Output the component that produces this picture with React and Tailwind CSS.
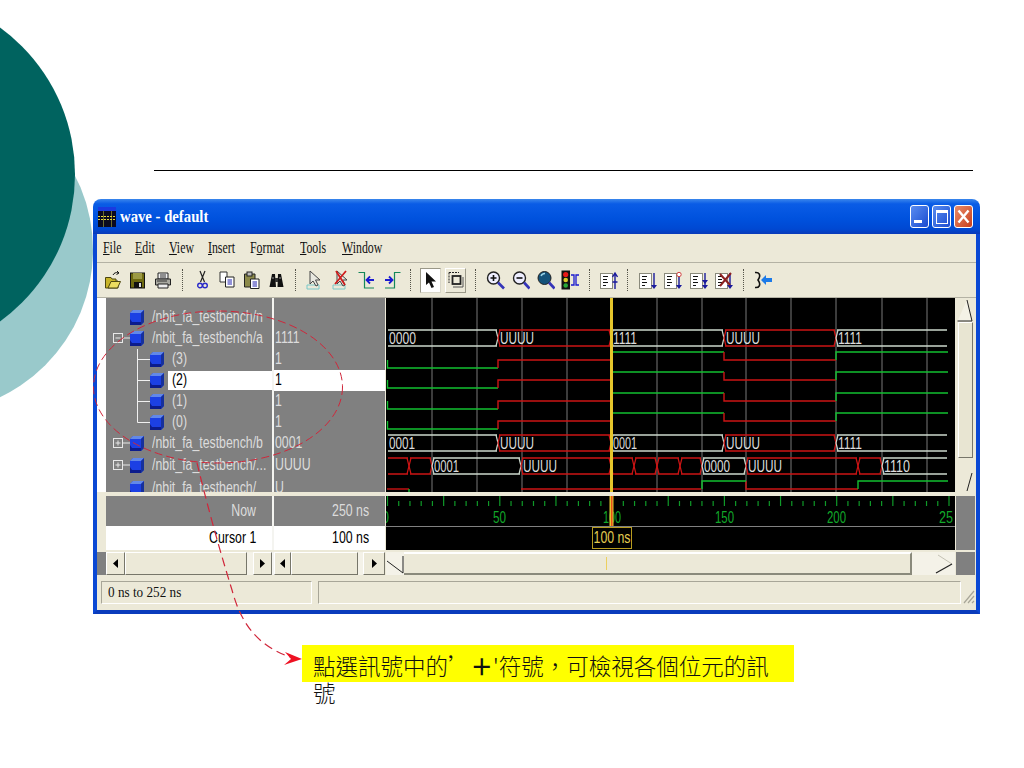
import React from 'react';

// wave window signal rows
const signals = [
  { name: '/nbit_fa_testbench/n', value: '', kind: 'top' },
  { name: '/nbit_fa_testbench/a', value: '1111', kind: 'open' },
  { name: '(3)', value: '1', kind: 'child' },
  { name: '(2)', value: '1', kind: 'child', selected: true },
  { name: '(1)', value: '1', kind: 'child' },
  { name: '(0)', value: '1', kind: 'last' },
  { name: '/nbit_fa_testbench/b', value: '0001', kind: 'closed' },
  { name: '/nbit_fa_testbench/...', value: 'UUUU', kind: 'closed', tall: true },
  { name: '/nbit_fa_testbench/', value: 'U', kind: 'top', tall: true },
];

const menus = [
  ['', 'F', 'ile', 'w-[32px]'],
  ['', 'E', 'dit', 'w-[34px]'],
  ['', 'V', 'iew', 'w-[39px]'],
  ['', 'I', 'nsert', 'w-[42px]'],
  ['F', 'o', 'rmat', 'w-[50px]'],
  ['', 'T', 'ools', 'w-[42px]'],
  ['', 'W', 'indow', 'w-[44px]'],
];

const GREEN = '#12c030';
const RED = '#cc1414';
const BUS = '#ccd8cc';

const gridX = [432, 477, 522, 567, 657, 702, 746, 791, 836, 882, 927];
const ticks = Array.from({ length: 51 }, (_, i) => 387.5 + i * 11.23);

const Sq = ({ children, className = '' }) => (
  <span className={`inline-block origin-left scale-x-[.77] whitespace-nowrap ${className}`}>{children}</span>
);

const SqRight = ({ children, className = '' }) => (
  <span className={`inline-block origin-right scale-x-[.77] whitespace-nowrap ${className}`}>{children}</span>
);

const SignalIcon = () => (
  <svg width="14" height="15" viewBox="0 0 14 15" className="shrink-0">
    <polygon points="3,0 14,0 14,12 11,15 0,15 0,3" fill="#1c40e4" />
    <polygon points="3,0 14,0 11,3 0,3" fill="#6288e8" />
    <polygon points="14,0 14,12 11,15 11,3" fill="#16309c" />
    <polygon points="0,15 11,15 11,12 2,12 0,9" fill="#0c1c8c" />
  </svg>
);

const Connector = ({ last }) => (
  <svg width="13" height="21" viewBox="0 0 13 21" className="shrink-0">
    <path d={last ? 'M.5 0V10.5H13' : 'M.5 0V21M.5 10.5H13'} stroke="#f0f0f0" fill="none" />
  </svg>
);

const Expander = ({ open }) => (
  <svg width="17" height="11" viewBox="0 0 17 11" className="shrink-0">
    <rect x=".5" y=".5" width="9" height="9" fill="none" stroke="#e8e8e8" />
    <path d={open ? 'M2.5 5H7.5M10 5H17' : 'M2.5 5H7.5M5 2.5V7.5M10 5H17'} stroke="#e8e8e8" />
  </svg>
);

const SignalName = ({ s }) => {
  if (s.kind === 'child' || s.kind === 'last') {
    return (
      <div className="flex h-full items-center pl-[31px]">
        <Connector last={s.kind === 'last'} />
        <SignalIcon />
        <div className={`ml-[4px] flex h-[19px] flex-1 items-center pl-[4px] ${s.selected ? 'bg-white text-black' : ''}`}>
          <Sq>{s.name}</Sq>
        </div>
      </div>
    );
  }
  return (
    <div className="flex h-full items-center pl-[7px]">
      {s.kind === 'top' ? <div className="w-[17px] shrink-0" /> : <Expander open={s.kind === 'open'} />}
      <SignalIcon />
      <div className="ml-[8px] overflow-hidden">
        <Sq>{s.name}</Sq>
      </div>
    </div>
  );
};

const Bus = ({ top, segs }) => (
  <g>
    {segs.map(([x1, x2, label, w], i) => {
      const color = label === 'X' || label === 'UUUU' ? RED : BUS;
      const first = i === 0;
      const last = i === segs.length - 1;
      return (
        <g key={i}>
          <path d={`M${x1 + 1} ${top}H${x2 - 1}M${x1 + 1} ${top + 16}H${x2 - 1}`} stroke={color} strokeWidth="1.4" fill="none" />
          {!last && <path d={`M${x2 - 2} ${top}L${x2} ${top + 8}L${x2 - 2} ${top + 16}`} stroke={color} strokeWidth="1.2" fill="none" />}
          {!first && <path d={`M${x1 + 2} ${top}L${x1} ${top + 8}L${x1 + 2} ${top + 16}`} stroke={color} strokeWidth="1.2" fill="none" />}
          {label !== 'X' && (
            <text x={x1 + 2} y={top + 14} fontSize="16" fill="#dcdcdc" fontFamily="'Liberation Sans',sans-serif" textLength={w} lengthAdjust="spacingAndGlyphs">
              {label}
            </text>
          )}
        </g>
      );
    })}
  </g>
);

const Bit = ({ hi, mid, lo }) => (
  <g fill="none" strokeWidth="1.4">
    <path d={`M387.5 ${mid}V${lo}H498`} stroke={GREEN} />
    <path d={`M498 ${lo}V${mid}H611V${hi + 2}`} stroke={RED} />
    <path d={`M612 ${hi}H724`} stroke={GREEN} />
    <path d={`M724 ${hi}V${mid}H836`} stroke={RED} />
    <path d={`M836 ${mid}V${hi}H948`} stroke={GREEN} />
  </g>
);

const Wave = () => (
  <svg width="569" height="194" viewBox="386 299 569 194" className="block">
    <rect x="386" y="299" width="569" height="194" fill="#000" />
    {gridX.map((x) => (
      <line key={x} x1={x} x2={x} y1="299" y2="493" stroke="#787878" />
    ))}
    <Bus top={331} segs={[[387, 498, '0000', 27], [498, 611, 'UUUU', 34], [611, 724, '1111', 24], [724, 836, 'UUUU', 34], [836, 948, '1111', 24]]} />
    <Bit hi={353} mid={361} lo={369} />
    <Bit hi={373} mid={381} lo={389} />
    <Bit hi={394} mid={402} lo={410} />
    <Bit hi={414} mid={422} lo={430} />
    <Bus top={436} segs={[[387, 498, '0001', 26], [498, 611, 'UUUU', 34], [611, 724, '0001', 24], [724, 836, 'UUUU', 34], [836, 948, '1111', 24]]} />
    <Bus top={459} segs={[[387, 409, 'X'], [409, 432, 'X'], [432, 521, '0001', 25], [521, 611, 'UUUU', 34], [611, 634, 'X'], [634, 657, 'X'], [657, 680, 'X'], [680, 702, 'X'], [702, 746, '0000', 26], [746, 858, 'UUUU', 34], [858, 882, 'X'], [882, 948, '1110', 26]]} />
    <g fill="none" strokeWidth="1.4">
      <path d="M387 490H409" stroke={RED} />
      <path d="M409 490V493" stroke={GREEN} />
      <path d="M521 490H611M611 490H701M746 482V490H858" stroke={RED} />
      <path d="M702 490V482H746M858 490V482H948" stroke={GREEN} />
    </g>
    <rect x="610" y="299" width="3" height="194" fill="#e6c62c" />
  </svg>
);

const Ruler = () => (
  <svg width="569" height="30" viewBox="386 497 569 30" className="block">
    <rect x="386" y="497" width="569" height="30" fill="#000" />
    {ticks.map((x, i) => (
      <line key={i} x1={x} x2={x} y1={i % 5 === 0 ? 497 : 502} y2="507" stroke="#0f9a28" strokeWidth="1.2" />
    ))}
    <g fontSize="16" fill="#12a82a" fontFamily="'Liberation Sans',sans-serif">
      <text x="382" y="524" textLength="7" lengthAdjust="spacingAndGlyphs">0</text>
      <text x="493" y="524" textLength="13" lengthAdjust="spacingAndGlyphs">50</text>
      <text x="603" y="524" textLength="18" lengthAdjust="spacingAndGlyphs">100</text>
      <text x="715" y="524" textLength="19" lengthAdjust="spacingAndGlyphs">150</text>
      <text x="827" y="524" textLength="19" lengthAdjust="spacingAndGlyphs">200</text>
      <text x="939" y="524" textLength="14" lengthAdjust="spacingAndGlyphs">25</text>
    </g>
    <rect x="609.5" y="497" width="4" height="30" fill="#e6c62c" />
    <rect x="611" y="497" width="1.5" height="30" fill="#e8501c" />
  </svg>
);

// toolbar drawings, all 18 box
const Ic = ({ w = 18, className = '', children }) => (
  <svg width={w} height="20" viewBox={`0 0 ${w} 20`} className={`shrink-0 ${className}`}>{children}</svg>
);

const Sep = ({ className = '' }) => <div className={`h-[22px] w-0 shrink-0 border-l border-dotted border-[#55544a] ${className}`} />;

const ListGlyph = ({ children }) => (
  <>
    <rect x=".5" y="3.5" width="12" height="15" fill="#fff" stroke="#8a8a7c" />
    <path d="M3 6.5H8M3 9.5H7M3 12.5H8M3 15.5H6" stroke="#111" />
    {children}
  </>
);

const Toolbar = () => (
  <div className="flex h-[36px] items-center border-t border-b border-t-[#b4b2a4] border-b-[#b4b2a4] pl-[8px]">
    <Ic w={16}>
      <path d="M.5 7.5H6L7 9H11V11L13 11V18H.5Z" fill="#c8b428" stroke="#4c4610" />
      <path d="M3 18L6 11.5H15.5L12.5 18Z" fill="#ecdc60" stroke="#4c4610" />
      <path d="M8 5C9 3 11 2 13 3M12 1L14 3L11.5 4.5" fill="none" stroke="#111" />
    </Ic>
    <Ic w={16} className="ml-[9px]">
      <rect x=".5" y="3" width="14" height="15" fill="#6e6a10" stroke="#111" />
      <rect x="3" y="3" width="9" height="6" fill="#9c9a44" />
      <rect x="4" y="12" width="8" height="6" fill="#111" />
      <rect x="9" y="13" width="2" height="4" fill="#ddd" />
    </Ic>
    <Ic className="ml-[8px]">
      <path d="M4 3H14V9H4Z" fill="#eee" stroke="#222" />
      <path d="M1.5 9H16.5V15H1.5Z" fill="#a8a8a0" stroke="#222" />
      <path d="M4 14H14V18H4Z" fill="#eee" stroke="#222" />
      <path d="M6 5H12M6 7H12M3 11H13" stroke="#333" />
    </Ic>
    <Sep className="ml-[10px]" />
    <Ic w={11} className="ml-[14px]">
      <path d="M3 1L7.5 12M8 1L3.5 12" stroke="#222" strokeWidth="1.2" fill="none" />
      <circle cx="3" cy="15.5" r="2.3" fill="none" stroke="#2a2ac8" strokeWidth="1.4" />
      <circle cx="8" cy="15.5" r="2.3" fill="none" stroke="#2a2ac8" strokeWidth="1.4" />
    </Ic>
    <Ic w={16} className="ml-[11px]">
      <path d="M1 2H8V12H1Z" fill="#fff" stroke="#333" />
      <path d="M6.5 7H15V17H6.5Z" fill="#fff" stroke="#222" />
      <path d="M8.5 10H13M8.5 12H13M8.5 14H13" stroke="#2222b0" />
    </Ic>
    <Ic className="ml-[8px]">
      <path d="M1.5 4H12V17H1.5Z" fill="#8c8a4a" stroke="#222" />
      <rect x="4" y="2" width="5" height="4" fill="#bbb" stroke="#222" />
      <path d="M7.5 9H16V18.5H7.5Z" fill="#fff" stroke="#222" />
      <path d="M9.5 12H14M9.5 14H14M9.5 16H14" stroke="#2222b0" />
    </Ic>
    <Ic className="ml-[7px]">
      <path d="M4 4H7L8 17H1.5ZM10 4H13L15.5 17H9.5Z" fill="#111" />
      <rect x="7" y="8" width="3" height="4" fill="#333" />
      <path d="M4 8H6M11 8H13" stroke="#999" />
    </Ic>
    <Sep className="ml-[9px]" />
    <Ic className="ml-[9px]">
      <path d="M2 15H14V19H2Z" fill="none" stroke="#79c8c8" />
      <path d="M5 1V14L8 11L11 16L13 15L10.5 10H15Z" fill="#e8e8e0" stroke="#444" />
    </Ic>
    <Ic className="ml-[9px]">
      <path d="M1 15H13V19H1Z" fill="none" stroke="#79c8c8" />
      <path d="M5 1V14L8 11L11 16L13 15L10.5 10H15Z" fill="#e8e8e0" stroke="#444" />
      <path d="M3 14L14 1M4 1L13 15" stroke="#d01c1c" strokeWidth="1.8" />
    </Ic>
    <Ic className="ml-[8px]">
      <path d="M.5 2.5H6.5V18H16" fill="none" stroke="#14885a" strokeWidth="1.2" />
      <path d="M16 10H9M12 6.5L8.5 10L12 13.5" fill="none" stroke="#1c1cd0" strokeWidth="1.8" />
    </Ic>
    <Ic className="ml-[7px]">
      <path d="M17.5 2.5H11.5V18H2" fill="none" stroke="#14885a" strokeWidth="1.2" />
      <path d="M2 10H9M6 6.5L9.5 10L6 13.5" fill="none" stroke="#1c1cd0" strokeWidth="1.8" />
    </Ic>
    <Sep className="ml-[9px]" />
    <div className="ml-[9px] flex h-[25px] w-[21px] shrink-0 items-center justify-center border border-[#d8d6c8] border-t-[#9a9888] border-l-[#9a9888] bg-white">
      <svg width="12" height="18" viewBox="0 0 12 18"><path d="M1 1V14L4 11.5L6.5 17L9 16L6.5 10.5H11Z" fill="#111" /></svg>
    </div>
    <div className="ml-[4px] flex h-[25px] w-[21px] shrink-0 items-center justify-center border border-[#fff] border-r-[#9a9888] border-b-[#9a9888]">
      <svg width="16" height="18" viewBox="0 0 16 18" fill="none" stroke="#222"><path d="M1 1.5H11M1 1.5V12" strokeDasharray="2 1" /><rect x="4.5" y="5" width="8" height="8" strokeWidth="1.8" /><path d="M15 6V16H5" stroke="#555" /></svg>
    </div>
    <Sep className="ml-[9px]" />
    <Ic w={19} className="ml-[10px]">
      <circle cx="7.5" cy="8" r="6" fill="#eef" stroke="#222" strokeWidth="1.4" />
      <path d="M7.5 5V11M4.5 8H10.5" stroke="#111" strokeWidth="1.6" />
      <path d="M12 12.5L18 18.5" stroke="#3434b8" strokeWidth="2.6" />
    </Ic>
    <Ic className="ml-[7px]">
      <circle cx="7.5" cy="8" r="6" fill="#eef" stroke="#222" strokeWidth="1.4" />
      <path d="M4.5 8H10.5" stroke="#111" strokeWidth="1.6" />
      <path d="M12 12.5L17.5 18.5" stroke="#3434b8" strokeWidth="2.6" />
    </Ic>
    <Ic className="ml-[7px]">
      <circle cx="7.5" cy="8" r="6.5" fill="#14527a" stroke="#222" />
      <path d="M4 6C5 4 6.5 3.5 8 3.5" stroke="#9cd4e8" strokeWidth="1.4" fill="none" />
      <path d="M12 12.5L17.5 18.5" stroke="#3434b8" strokeWidth="2.6" />
    </Ic>
    <Ic className="ml-[6px]">
      <rect x=".5" y=".5" width="8.5" height="19" fill="#111" />
      <circle cx="4.7" cy="4.5" r="2.6" fill="#e81818" />
      <circle cx="4.7" cy="10" r="2.3" fill="#d8c828" />
      <circle cx="4.7" cy="15.5" r="2.3" fill="#28a838" />
      <path d="M10 5H13V15H10M18 5H15V15H18" fill="none" stroke="#1a1ad0" strokeWidth="1.3" />
    </Ic>
    <Sep className="ml-[10px]" />
    <Ic className="ml-[10px]">
      <ListGlyph>
        <path d="M15 19V4M12.5 7L15 3L17.5 7M12.5 12H17.5" stroke="#1a1a9c" strokeWidth="1.4" fill="none" />
      </ListGlyph>
    </Ic>
    <Sep className="ml-[9px]" />
    <Ic className="ml-[11px]">
      <ListGlyph>
        <path d="M15 3V15" stroke="#1a1a9c" strokeWidth="1.4" />
        <path d="M12 15H18L15 19Z" fill="#1a1a9c" />
      </ListGlyph>
    </Ic>
    <Ic className="ml-[7px]">
      <ListGlyph>
        <circle cx="15" cy="4.5" r="2.2" fill="#fff" stroke="#d04040" />
        <path d="M15 7V15" stroke="#1a1a9c" strokeWidth="1.4" />
        <path d="M12 15H18L15 19Z" fill="#1a1a9c" />
      </ListGlyph>
    </Ic>
    <Ic className="ml-[8px]">
      <ListGlyph>
        <path d="M15 3V15" stroke="#1a1a9c" strokeWidth="1.4" />
        <path d="M12 10H18L15 14ZM12 15H18L15 19Z" fill="#1a1a9c" />
      </ListGlyph>
    </Ic>
    <Ic className="ml-[7px]">
      <ListGlyph>
        <path d="M15 3V15" stroke="#1a1a9c" strokeWidth="1.4" />
        <path d="M12 15H18L15 19Z" fill="#1a1a9c" />
        <path d="M5 16L16 3M5 4L15 15" stroke="#8c2020" strokeWidth="2" />
      </ListGlyph>
    </Ic>
    <Sep className="ml-[10px]" />
    <Ic className="ml-[10px]">
      <path d="M1 2.5C5 2 7.5 5 4 10C7.5 15 5 18 1 17.5" fill="none" stroke="#111" strokeWidth="1.6" />
      <path d="M7 10L12 5V8H18V12H12V15Z" fill="#1c7ae8" />
    </Ic>
  </div>
);

const Arrow = ({ dir }) => (
  <svg width="5" height="9" viewBox="0 0 5 9">
    <path d={dir === 'left' ? 'M5 0V9L0 4.5Z' : 'M0 0V9L5 4.5Z'} fill="#000" />
  </svg>
);

const ScrollBtn = ({ dir, className = '' }) => (
  <div className={`flex h-full shrink-0 items-center justify-center border border-white border-r-[#77766a] border-b-[#77766a] bg-[#ece9d8] ${className}`}>
    <Arrow dir={dir} />
  </div>
);

const Thumb = () => <div className="flex-1 border border-white border-r-[#77766a] border-b-[#77766a] bg-[#ece9d8]" />;

const SideGray = ({ className = '' }) => <div className={`bg-[#808080] ${className}`} />;

const WindowButtons = () => (
  <div className="ml-auto mr-[7px] flex items-center gap-[3px]">
    <div className="relative h-[23px] w-[19px] rounded-[3px] border border-white bg-linear-to-br from-[#5a8cf0] to-[#1c4ad0]">
      <div className="absolute bottom-[4px] left-[3px] h-[3px] w-[8px] bg-white" />
    </div>
    <div className="flex h-[23px] w-[19px] items-center justify-center rounded-[3px] border border-white bg-linear-to-br from-[#5a8cf0] to-[#1c4ad0]">
      <div className="h-[14px] w-[12px] border border-t-[3px] border-white" />
    </div>
    <div className="flex h-[23px] w-[19px] items-center justify-center rounded-[3px] border border-white bg-linear-to-br from-[#e88a68] to-[#c83c18]">
      <svg width="13" height="15" viewBox="0 0 13 15"><path d="M1.5 1.5L11.5 13.5M11.5 1.5L1.5 13.5" stroke="#fff" strokeWidth="2.4" /></svg>
    </div>
  </div>
);

const WaveWindow = () => (
  <div className="ml-[93px] mt-[28px] w-[887px]">
    <div className="flex h-[35px] items-center rounded-t-[8px] bg-[linear-gradient(180deg,#3a86ec_0%,#0a5ce6_14%,#0052de_55%,#0048d2_86%,#0a3ab8_100%)] pl-[5px]">
      <svg width="18" height="20" viewBox="0 0 18 20" className="shrink-0">
        <rect width="18" height="20" fill="#0a0a20" />
        <rect width="18" height="4" fill="#1a3ae0" />
        <path d="M5.5 4V20M13.5 4V20" stroke="#6a6a30" />
        <path d="M0 9.5H18M0 12.5H18" stroke="#e8d838" strokeDasharray="2 1" />
      </svg>
      <span className="ml-[4px] inline-block origin-left scale-x-[.92] whitespace-nowrap font-['Liberation_Serif',serif] text-[16px] font-bold text-white">wave - default</span>
      <WindowButtons />
    </div>
    <div className="h-[380px] border-x-4 border-b-4 border-x-[#0a48d4] border-b-[#0a3cbc] bg-[#ece9d8]">
      <div className="flex h-[28px] items-center pl-[6px] font-['Liberation_Serif',serif] text-[16px] text-[#111]">
        {menus.map(([pre, u, rest, w]) => (
          <div key={rest} className={w}>
            <span className="inline-block origin-left scale-x-[.74] whitespace-nowrap">{pre}<span className="underline">{u}</span>{rest}</span>
          </div>
        ))}
      </div>
      <Toolbar />
      <div className="font-['Liberation_Sans',sans-serif] text-[16px]">
        {/* signal list + wave */}
        <div className="flex h-[194px]">
          <div className="w-[9px] bg-white" />
          <div className="w-[166px] overflow-hidden bg-[#808080] pt-[8.5px] text-[#dcdcdc]">
            {signals.map((s) => (
              <div key={s.name + s.value} className={s.tall ? 'h-[23px]' : 'h-[21px]'}><SignalName s={s} /></div>
            ))}
          </div>
          <div className="w-[2px] bg-[#f4f4f0]" />
          <div className="w-[111px] overflow-hidden bg-[#808080] pt-[8.5px] text-[#dcdcdc]">
            {signals.map((s) => (
              <div key={s.name + s.value} className={`flex items-center pl-[1px] ${s.tall ? 'h-[23px]' : 'h-[21px]'} ${s.selected ? 'bg-white text-black' : ''}`}>
                <Sq>{s.value}</Sq>
              </div>
            ))}
          </div>
          <div className="w-px bg-[#ece9d8]" />
          <Wave />
          <div className="flex w-[20px] flex-col border-l border-[#ece9d8] bg-[#ece9d8]">
            <div className="h-[24px] shrink-0">
              <svg width="19" height="24" viewBox="0 0 19 24"><path d="M1.5 23H16L11 2" fill="#f4f2e6" stroke="#222" /></svg>
            </div>
            <div className="mx-[2px] h-[136px] border border-white border-r-[#77766a] border-b-[#77766a] bg-[#e8e5d2]" />
            <div className="flex-1" />
            <div className="h-[20px] shrink-0">
              <svg width="19" height="20" viewBox="0 0 19 20"><path d="M11 19L16 1" fill="none" stroke="#222" /></svg>
            </div>
          </div>
        </div>
        <div className="h-[4px] bg-[#ece9d8]" />
        {/* now row */}
        <div className="flex h-[30px]">
          <SideGray className="w-[9px] bg-[#ece9d8]" />
          <div className="flex w-[166px] items-center justify-end bg-[#808080] pr-[16px] text-[#dcdcdc]"><SqRight>Now</SqRight></div>
          <div className="w-[2px] bg-[#f4f4f0]" />
          <div className="flex w-[111px] items-center justify-end bg-[#808080] pr-[16px] text-[#dcdcdc]"><SqRight>250 ns</SqRight></div>
          <div className="w-px bg-[#ece9d8]" />
          <Ruler />
          <SideGray className="ml-px w-[19px]" />
        </div>
        {/* cursor row */}
        <div className="flex h-[24px]">
          <div className="w-[9px] bg-[#ece9d8]" />
          <div className="flex w-[166px] items-center justify-end bg-white pr-[16px] text-black"><SqRight>Cursor 1</SqRight></div>
          <div className="w-[2px] bg-[#f4f4f0]" />
          <div className="flex w-[111px] items-center justify-end bg-white pr-[16px] text-black"><SqRight>100 ns</SqRight></div>
          <div className="w-px bg-[#ece9d8]" />
          <div className="w-[569px] border-t border-[#808080] bg-black pl-[206px]">
            <div className="flex h-[22px] w-[40px] items-center justify-center border border-[#b89c20] text-[#e4cc50]">
              <span className="inline-block scale-x-[.77] whitespace-nowrap">100 ns</span>
            </div>
          </div>
          <SideGray className="ml-px w-[19px]" />
        </div>
        {/* scroll row */}
        <div className="mt-[2px] flex h-[23px]">
          <SideGray className="w-[9px]" />
          <div className="flex w-[166px] bg-[#f4f2e8]">
            <ScrollBtn dir="left" className="w-[19px]" />
            <Thumb />
            <div className="w-[6px]" />
            <ScrollBtn dir="right" className="w-[19px]" />
          </div>
          <div className="w-[2px] bg-[#f4f4f0]" />
          <div className="flex w-[111px] bg-[#f4f2e8]">
            <ScrollBtn dir="left" className="w-[17px]" />
            <Thumb />
            <div className="w-[5px]" />
            <ScrollBtn dir="right" className="w-[22px]" />
          </div>
          <div className="w-px bg-[#ece9d8]" />
          <div className="flex w-[569px] bg-[#f4f2e8]">
            <svg width="18" height="23" viewBox="0 0 18 23" className="shrink-0"><path d="M1 9L17 21V4" fill="none" stroke="#222" /></svg>
            <div className="relative w-[508px] border-t-2 border-r-2 border-b-2 border-t-white border-r-[#8a8a7c] border-b-[#8a8a7c] bg-[#ece9d8]">
              <div className="absolute left-[202px] top-[3px] h-[13px] w-px bg-[#ecd060]" />
            </div>
            <div className="flex-1" />
            <svg width="20" height="23" viewBox="0 0 20 23" className="shrink-0">
              <path d="M17 12L3 3" fill="none" stroke="#c4c2b4" />
              <path d="M1 21L17 12" fill="none" stroke="#222" strokeWidth="1.2" />
            </svg>
          </div>
          <SideGray className="ml-px w-[19px]" />
        </div>
      </div>
      {/* status bar */}
      <div className="mt-[6px] flex h-[23px] pl-[4px]">
        <div className="flex w-[211px] items-center border border-[#a8a698] border-r-[#fff] border-b-[#fff] pl-[6px] font-['Liberation_Serif',serif] text-[15px] text-[#111]">
          <span className="inline-block origin-left scale-x-[.88] whitespace-nowrap">0 ns to 252 ns</span>
        </div>
        <div className="ml-[6px] flex-1 border border-[#a8a698] border-r-[#fff] border-b-[#fff]" />
        <svg width="15" height="23" viewBox="0 0 15 23" className="shrink-0">
          <path d="M3 22L13 10M7 22L13 15M11 22L13 20" stroke="#a8a698" strokeWidth="1.2" fill="none" />
        </svg>
      </div>
    </div>
  </div>
);

export default function App() {
  return (
    <div className="relative h-[768px] w-[1024px] overflow-hidden bg-white">
      <div className="absolute left-[-233px] top-[87px] h-[326px] w-[326px] rounded-full bg-[#99c9cb]" />
      <div className="absolute left-[-288px] top-[-7px] h-[363px] w-[363px] rounded-full bg-[#00635f]" />

      <div className="relative pt-[170px]">
        <div className="ml-[154px] h-px w-[819px] bg-black" />
        <WaveWindow />
        <div className="ml-[302px] mt-[31px] h-[37px] w-[492px] bg-[#ffff00] pl-[11px] pt-[7px] font-['Noto_Sans_CJK_TC','Noto_Sans_CJK_SC',sans-serif] text-[22.5px] font-light leading-[27px] text-[#111]">
          點選訊號中的’<span className="font-bold">＋</span>'符號，可檢視各個位元的訊
          <br />
          號
        </div>
      </div>

      {/* red dashed note mark over the window */}
      <svg width="1024" height="768" viewBox="0 0 1024 768" className="pointer-events-none absolute left-0 top-0">
        <ellipse cx="218" cy="387" rx="124.5" ry="76" fill="none" stroke="#d0263a" strokeWidth="1" strokeDasharray="8 4" />
        <path d="M197 463C206 500 218 545 232 590C240 620 255 645 290 657" fill="none" stroke="#d0263a" strokeWidth="1.2" strokeDasharray="9 5" />
        <path d="M302 659L285 652L291 659L284 665Z" fill="#ee1122" />
      </svg>
    </div>
  );
}
